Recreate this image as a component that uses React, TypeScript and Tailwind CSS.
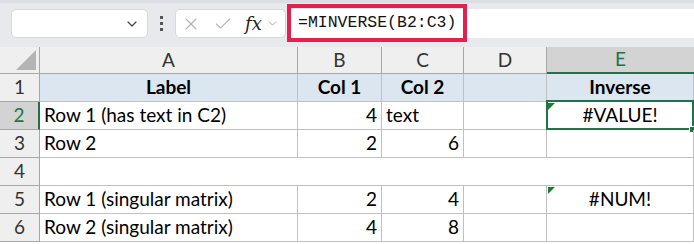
import { X, Check, ChevronDown } from "lucide-react";

const cols = [
    { key: "A", w: "w-[258px]" },
    { key: "B", w: "w-[84px]" },
    { key: "C", w: "w-[82px]" },
    { key: "D", w: "w-[83px]" },
    { key: "E", w: "w-[147px]" },
];

type Cell = { v?: string; align?: "l" | "r" | "c"; err?: boolean };

const rows: { n: number; cells: Cell[] }[] = [
    { n: 2, cells: [{ v: "Row 1 (has text in C2)" }, { v: "4", align: "r" }, { v: "text" }, {}, { v: "#VALUE!", align: "c", err: true }] },
    { n: 3, cells: [{ v: "Row 2" }, { v: "2", align: "r" }, { v: "6", align: "r" }, {}, {}] },
    { n: 4, cells: [{}, {}, {}, {}, {}] },
    { n: 5, cells: [{ v: "Row 1 (singular matrix)" }, { v: "2", align: "r" }, { v: "4", align: "r" }, {}, { v: "#NUM!", align: "c", err: true }] },
    { n: 6, cells: [{ v: "Row 2 (singular matrix)" }, { v: "4", align: "r" }, { v: "8", align: "r" }, {}, {}] },
];

export default function App() {
    return (
        <div className="w-[694px] h-[244px] overflow-hidden bg-white text-black font-['Lato',sans-serif]">
            {/* formula bar */}
            <div className="h-[47px] bg-[#e7e9ec] border-t-[3px] border-[#dcdee3] flex items-start pt-[6px] pl-[11px] relative">
                <div className="w-[137px] h-[29px] bg-white rounded-[5px] border border-[#d6d8dc] flex items-center justify-end pr-[7px]">
                    <ChevronDown size={16} strokeWidth={1.8} className="text-[#444]" />
                </div>
                <div className="w-[27px] h-[29px] flex flex-col items-center justify-center gap-[3px]">
                    <span className="w-[3px] h-[3px] bg-[#555]" />
                    <span className="w-[3px] h-[3px] bg-[#555]" />
                    <span className="w-[3px] h-[3px] bg-[#555]" />
                </div>
                <div className="w-[111px] h-[29px] bg-white rounded-[5px] border border-[#d6d8dc] flex items-center pl-[5px]">
                    <X size={20} strokeWidth={1.3} className="text-[#b4b4b4]" />
                    <Check size={20} strokeWidth={1.3} className="text-[#b4b4b4] ml-[12px]" />
                    <span className="ml-[12px] font-['DejaVu_Serif',serif] italic text-[18px] leading-none text-[#222]">fx</span>
                    <ChevronDown size={13} strokeWidth={1.6} className="text-[#999] ml-[4px]" />
                </div>
                <div className="ml-[2px] flex-1 h-[29px] bg-white flex items-center pl-[10px]">
                    <span className="font-['Liberation_Mono',monospace] text-[16.5px] leading-none text-[#111]">=MINVERSE(B2:C3)</span>
                </div>
                <div className="absolute left-[287px] top-[1px] w-[180px] h-[38px] border-[4px] border-[#e3204f]" />
            </div>

            {/* column headers */}
            <div className="flex h-[27px] bg-[#efefef] text-[19px] text-[#333]">
                <div className="w-[40px] border-r border-b border-[#a8a8a8] flex items-end justify-end pr-[3px] pb-[3px]">
                    <svg width="20" height="20" viewBox="0 0 20 20">
                        <polygon points="20,0 20,20 0,20" fill="#b4b4b4" />
                    </svg>
                </div>
                {cols.map((c) =>
                    c.key === "E" ? (
                        <div key={c.key} className={`${c.w} flex items-center justify-center bg-[#d3d3d3] border-b-2 border-[#217346] text-[#217346]`}>
                            {c.key}
                        </div>
                    ) : (
                        <div key={c.key} className={`${c.w} flex items-center justify-center border-r border-b border-[#a8a8a8]`}>
                            {c.key}
                        </div>
                    )
                )}
            </div>

            {/* row 1 */}
            <div className="flex h-[28px] text-[19px]">
                <div className="w-[40px] bg-[#efefef] border-r border-b border-[#a8a8a8] flex items-center justify-center text-[#333]">1</div>
                {["Label", "Col 1", "Col 2", "", "Inverse"].map((t, i) => (
                    <div key={i} className={`${cols[i].w} bg-[#dce6f1] border-r border-b border-[#c0c0c0] flex items-center justify-center font-bold`}>
                        {t}
                    </div>
                ))}
            </div>

            {rows.map((r) => (
                <div key={r.n} className="flex h-[28px] text-[19px]">
                    {r.n === 2 ? (
                        <div className="w-[40px] bg-[#d3d3d3] border-r-2 border-r-[#217346] border-b border-b-[#a8a8a8] flex items-center justify-center text-[#217346]">
                            {r.n}
                        </div>
                    ) : (
                        <div className="w-[40px] bg-[#efefef] border-r border-b border-[#a8a8a8] flex items-center justify-center text-[#333]">
                            {r.n}
                        </div>
                    )}
                    {r.cells.map((c, i) => {
                        const just = c.align === "r" ? "justify-end pr-[4px]" : c.align === "c" ? "justify-center" : "justify-start pl-[4px]";
                        const border = r.n === 4 && i < 4 ? "border-b border-[#c0c0c0]" : "border-r border-b border-[#c0c0c0]";
                        const selected = r.n === 2 && i === 4;
                        return (
                            <div key={i} className={`${cols[i].w} ${border} flex items-center ${just} relative whitespace-nowrap`}>
                                {c.err && (
                                    <span className="absolute left-[1px] top-[1px] w-0 h-0 border-t-[7px] border-r-[7px] border-t-[#1d7f2e] border-r-transparent" />
                                )}
                                {selected && (
                                    <>
                                        <span className="absolute -left-[1px] -top-[2px] -right-[1px] -bottom-[1px] border-2 border-[#217346] pointer-events-none" />
                                        <span className="absolute -right-[3px] -bottom-[4px] w-[7px] h-[7px] bg-[#217346] border border-white" />
                                    </>
                                )}
                                {c.v}
                            </div>
                        );
                    })}
                </div>
            ))}
        </div>
    );
}
